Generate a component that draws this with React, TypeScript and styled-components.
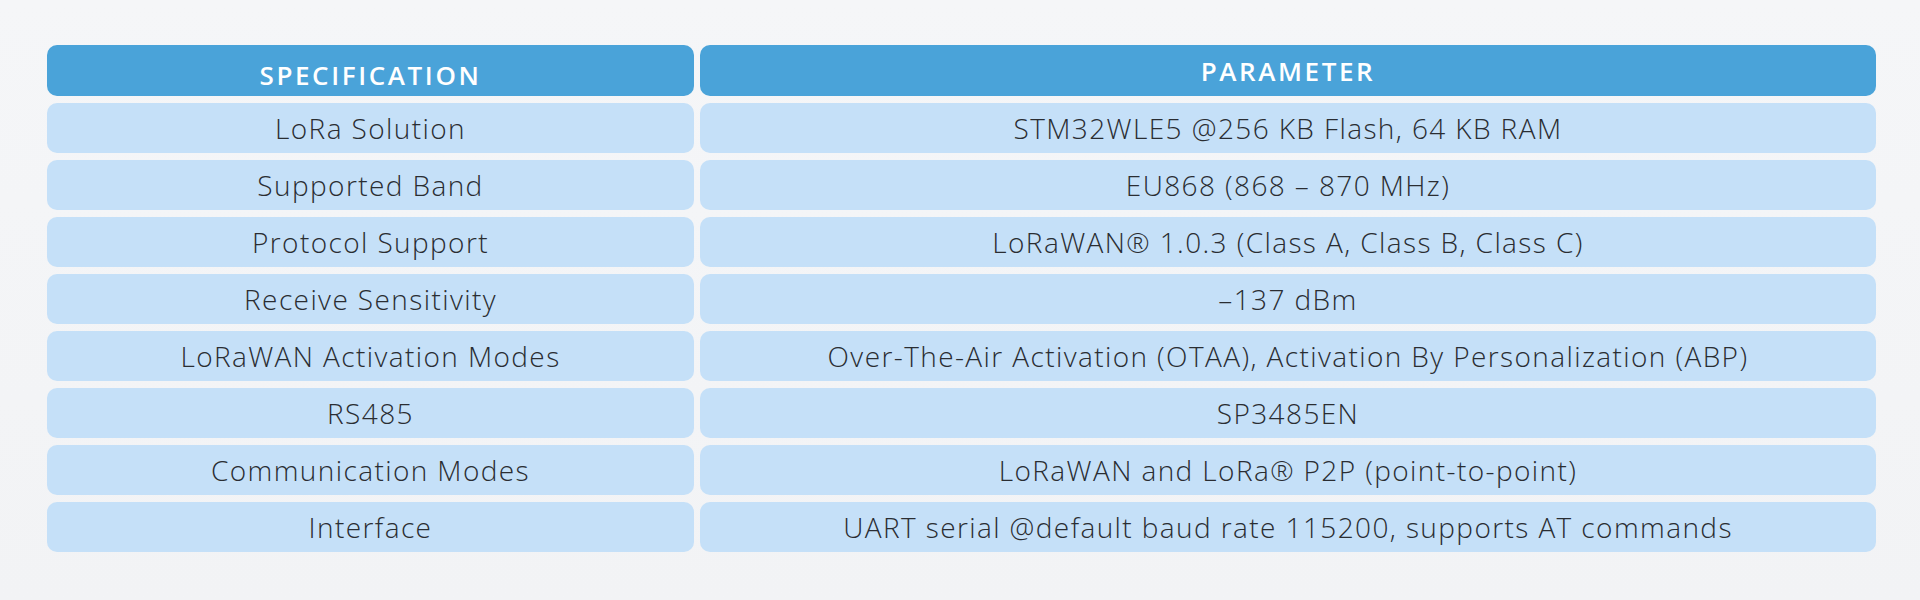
import React from "react";
import styled, { createGlobalStyle } from "styled-components";

const GlobalStyle = createGlobalStyle`
  html, body {
    margin: 0;
    padding: 0;
    background: #f3f4f6;
  }
  body {
    font-family: "Open Sans", "Noto Sans", sans-serif;
  }
`;

const Page = styled.div`
  width: 1920px;
  height: 600px;
  box-sizing: border-box;
  padding: 45px 44px 0 47px;
  background: linear-gradient(180deg, #f5f6f8 0%, #f2f3f5 100%);
`;

const Table = styled.div`
  display: grid;
  grid-template-columns: 647px 1fr;
  column-gap: 6px;
  row-gap: 7px;
`;

const HeadCell = styled.div<{ $shift?: number }>`
  height: 51px;
  box-sizing: border-box;
  padding-top: ${(p) => p.$shift ?? 0}px;
  display: flex;
  align-items: center;
  justify-content: center;
  background: #4aa3d9;
  border-radius: 10px;
  color: #ffffff;
  font-size: 26px;
  font-weight: 600;
  letter-spacing: 2.6px;
  text-transform: uppercase;
`;

const Cell = styled.div`
  height: 50px;
  display: flex;
  align-items: center;
  justify-content: center;
  background: #c5e0f8;
  border-radius: 10px;
  color: #2a2d32;
  font-size: 28px;
  font-weight: 300;
  letter-spacing: 1.4px;
  white-space: nowrap;
`;

const rows: [string, string][] = [
  ["LoRa Solution", "STM32WLE5 @256 KB Flash, 64 KB RAM"],
  ["Supported Band", "EU868 (868 – 870 MHz)"],
  ["Protocol Support", "LoRaWAN® 1.0.3 (Class A, Class B, Class C)"],
  ["Receive Sensitivity", "–137 dBm"],
  [
    "LoRaWAN Activation Modes",
    "Over-The-Air Activation (OTAA), Activation By Personalization (ABP)",
  ],
  ["RS485", "SP3485EN"],
  ["Communication Modes", "LoRaWAN and LoRa® P2P (point-to-point)"],
  ["Interface", "UART serial @default baud rate 115200, supports AT commands"],
];

const App = () => {
  return (
    <>
      <GlobalStyle />
      <Page>
        <Table>
          <HeadCell $shift={8}>Specification</HeadCell>
          <HeadCell>Parameter</HeadCell>
          {rows.map(([spec, param]) => (
            <React.Fragment key={spec}>
              <Cell>{spec}</Cell>
              <Cell>{param}</Cell>
            </React.Fragment>
          ))}
        </Table>
      </Page>
    </>
  );
};

export default App;
